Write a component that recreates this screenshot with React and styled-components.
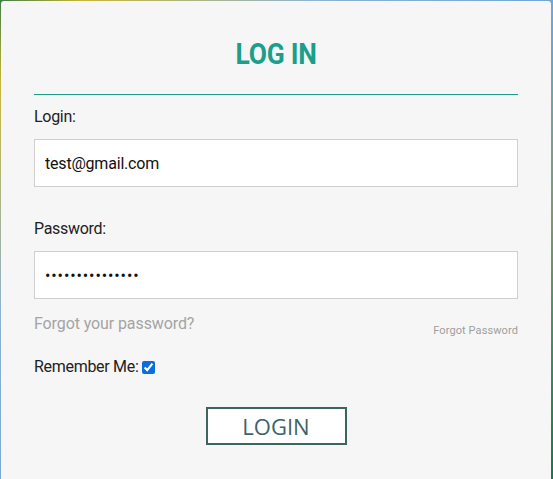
import React from 'react';
import styled, { createGlobalStyle } from 'styled-components';

const GlobalStyle = createGlobalStyle`
  html, body {
    margin: 0;
    padding: 0;
    height: 100%;
  }
  body {
    font-family: Roboto, 'Liberation Sans', sans-serif;
    background: linear-gradient(135deg, #3f7f45 0%, #c9b53a 8%, #8fb3cf 30%, #6fa6d8 55%, #7b9a6a 75%, #0f7a55 100%);
  }
  #root {
    min-height: 100vh;
  }
`;

const Page = styled.div`
  box-sizing: border-box;
  height: 479px;
  padding: 1px 2px 0 1px;
  display: flex;
`;

const Card = styled.form`
  box-sizing: border-box;
  flex: 1;
  background: #f6f6f6;
  border-radius: 3px 3px 0 0;
  padding: 33px 33px 0 33px;
  display: flex;
  flex-direction: column;
`;

const Title = styled.h1`
  margin: 0;
  text-align: center;
  line-height: 38px;
  padding-bottom: 21px;
  border-bottom: 1px solid #1b9e8a;
`;

const TitleText = styled.span`
  display: inline-block;
  color: #1b9e8a;
  font-family: Roboto, sans-serif;
  font-weight: 700;
  font-size: 30px;
  letter-spacing: -0.3px;
  transform: scaleX(0.88);
`;

const Label = styled.label`
  display: block;
  color: #222;
  font-size: 16px;
  letter-spacing: -0.3px;
  line-height: 20px;
  margin-top: ${({ $top }) => $top}px;
  margin-bottom: 12px;
`;

const Input = styled.input`
  box-sizing: border-box;
  width: 100%;
  height: 48px;
  border: 1px solid #cfcfcf;
  background: #fff;
  padding: 0 10px;
  font-family: Roboto, sans-serif;
  font-size: 16px;
  color: #111;
  outline: none;
  letter-spacing: ${({ type }) => (type === 'password' ? '0.9px' : '-0.2px')};
`;

const ForgotRow = styled.div`
  display: flex;
  justify-content: space-between;
  align-items: flex-start;
  margin-top: 15px;
`;

const ForgotText = styled.span`
  color: #a4a4a4;
  font-size: 16px;
  letter-spacing: -0.1px;
  line-height: 20px;
`;

const ForgotLink = styled.a`
  color: #9e9e9e;
  font-size: 11px;
  margin-top: 10px;
  text-decoration: none;
  letter-spacing: 0.1px;
`;

const RememberRow = styled.label`
  display: flex;
  align-items: center;
  gap: 4px;
  margin-top: 20px;
  color: #222;
  font-size: 16px;
  letter-spacing: -0.3px;
  line-height: 20px;
`;

const Check = styled.input`
  margin: 0;
  width: 13px;
  height: 13px;
  accent-color: #0b6ee0;
`;

const ButtonRow = styled.div`
  display: flex;
  justify-content: center;
  margin-top: 30px;
`;

const LoginButton = styled.button`
  box-sizing: border-box;
  width: 141px;
  height: 38px;
  background: #fff;
  border: 2px solid #3d6560;
  color: #3e6368;
  font-family: 'Open Sans', sans-serif;
  font-size: 22px;
  line-height: 1;
  padding: 0;
`;

const App = () => (
  <Page>
    <GlobalStyle />
    <Card onSubmit={(e) => e.preventDefault()}>
      <Title>
        <TitleText>LOG IN</TitleText>
      </Title>
      <Label $top={12}>Login:</Label>
      <Input type="text" defaultValue="test@gmail.com" />
      <Label $top={32}>Password:</Label>
      <Input type="password" defaultValue="123456789012345" />
      <ForgotRow>
        <ForgotText>Forgot your password?</ForgotText>
        <ForgotLink href="#">Forgot Password</ForgotLink>
      </ForgotRow>
      <RememberRow>
        Remember Me: <Check type="checkbox" defaultChecked />
      </RememberRow>
      <ButtonRow>
        <LoginButton type="submit">LOGIN</LoginButton>
      </ButtonRow>
    </Card>
  </Page>
);

export default App;
